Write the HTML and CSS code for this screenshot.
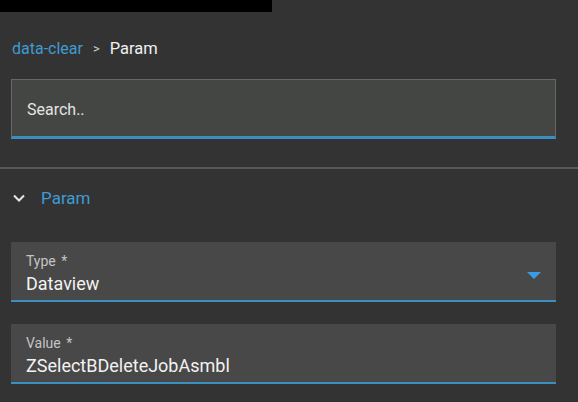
FILE: index.html
```html
<!DOCTYPE html>
<html>
<head>
<meta charset="utf-8">
<link rel="stylesheet" href="styles.css">
</head>
<body>
<div class="topbar"></div>
<nav class="crumbs"><span class="crumb-link">data-clear</span><span class="crumb-sep">&gt;</span><span class="crumb-current">Param</span></nav>
<div class="search-wrap">
  <div class="search"><span class="search-ph">Search..</span></div>
</div>
<hr class="divider">
<div class="section-head">
  <svg class="chevron" width="12" height="8" viewBox="0 0 12 8"><path d="M1 1.5 L6 6.5 L11 1.5" fill="none" stroke="#e8e8e8" stroke-width="2"/></svg>
  <span class="section-title">Param</span>
</div>
<div class="fields">
  <div class="field">
    <div class="field-text">
      <span class="field-label">Type *</span>
      <span class="field-value">Dataview</span>
    </div>
    <svg class="caret" width="14" height="8" viewBox="0 0 14 8"><path d="M0 0 H14 L7 7 Z" fill="#3a9be0"/></svg>
  </div>
  <div class="field">
    <div class="field-text">
      <span class="field-label">Value *</span>
      <span class="field-value">ZSelectBDeleteJobAsmbl</span>
    </div>
  </div>
</div>
</body>
</html>
```
FILE: styles.css
```css
html, body {
  margin: 0;
  padding: 0;
  background: #333333;
  font-family: Roboto, "Liberation Sans", sans-serif;
  color: #e6e6e6;
  height: 402px;
  overflow: hidden;
}
.topbar {
  width: 272px;
  height: 12px;
  background: #000;
}
.crumbs {
  display: flex;
  align-items: center;
  gap: 10px;
  padding: 27px 0 0 12px;
  height: 20px;
  font-size: 16px;
  line-height: 20px;
}
.crumb-link { color: #3f9bd1; }
.crumb-sep { color: #d0d0d0; font-size: 13px; }
.crumb-current { color: #f0f0f0; font-size: 16.5px; }
.search-wrap {
  padding: 20px 22px 0 11px;
}
.search {
  box-sizing: border-box;
  height: 60px;
  background: #444644;
  border: 1px solid #676767;
  border-bottom: 3px solid #3a8fbe;
  display: flex;
  align-items: center;
  padding-left: 15px;
  padding-top: 3px;
}
.search-ph {
  font-size: 16px;
  color: #e4e4e4;
}
.divider {
  margin: 28px 0 0 0;
  border: 0;
  height: 2px;
  background: #575757;
}
.section-head {
  display: flex;
  align-items: center;
  height: 22px;
  padding: 18px 0 0 13px;
  gap: 16px;
}
.section-title {
  color: #3f9bd6;
  font-size: 17px;
}
.fields {
  display: flex;
  flex-direction: column;
  gap: 22px;
  padding: 33px 22px 0 11px;
}
.field {
  height: 60px;
  box-sizing: border-box;
  background: #484848;
  border-bottom: 2px solid #3a8fbe;
  display: flex;
  align-items: center;
  justify-content: space-between;
  padding: 0 15px 0 15px;
}
.field-text {
  display: flex;
  flex-direction: column;
  gap: 4px;
  padding-top: 4px;
}
.field-label {
  font-size: 14px;
  color: #c4c4c4;
  word-spacing: 2px;
}
.field-value {
  font-size: 18px;
  color: #f2f2f2;
}
.caret {
  margin-top: 10px;
}
```
